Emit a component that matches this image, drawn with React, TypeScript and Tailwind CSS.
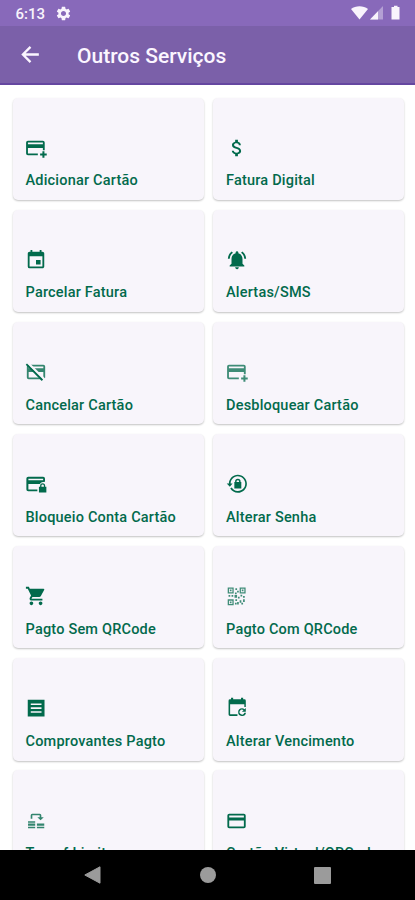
import React from 'react';
import {
  MdAttachMoney,
  MdEvent,
  MdNotificationsActive,
  MdSettings,
  MdShoppingCart,
} from 'react-icons/md';

interface Service {
  id: string;
  name: string;
  icon: React.ReactNode;
}

interface GlyphProps {
  children: React.ReactNode;
  className?: string;
}

function Glyph({ children, className = '' }: GlyphProps) {
  return (
    <svg viewBox="0 0 24 24" fill="currentColor" className={`h-[22px] w-[22px] ${className}`}>
      {children}
    </svg>
  );
}

function CardIcon() {
  return (
    <Glyph>
      <path
        fillRule="evenodd"
        d="M3.500 4h16a2 2 0 0 1 2 2v12a2 2 0 0 1-2 2h-16a2 2 0 0 1-2-2V6a2 2 0 0 1 2-2zm0 2v2.300h16V6zm0 5.500V18h16v-6.500z"
      />
    </Glyph>
  );
}

function CardPlusIcon({ className }: { className?: string }) {
  return (
    <Glyph className={className}>
      <path
        fillRule="evenodd"
        d="M3.200 4h16.300a2 2 0 0 1 2 2v8.500h-2V12H3.200v6H14v2H3.200a2 2 0 0 1-2-2V6a2 2 0 0 1 2-2zm0 2v2h16.300V6z"
      />
      <path d="M19 15.500h2.200V18h2.500v2.200h-2.500v2.500H19v-2.500h-2.500V18H19z" />
    </Glyph>
  );
}

function CardOffIcon() {
  return (
    <Glyph>
      <path
        fillRule="evenodd"
        opacity="0.8"
        d="M4 4h16a2 2 0 0 1 2 2v12a2 2 0 0 1-2 2H4a2 2 0 0 1-2-2V6a2 2 0 0 1 2-2zm0 2v2h16V6zm0 6v6h16v-6z"
      />
      <path d="M3 2l18.500 18.500" stroke="#f8f5fb" strokeWidth="2.800" />
      <path d="M1.500 3.500l17.500 17.500" stroke="currentColor" strokeWidth="2" />
    </Glyph>
  );
}

function CardLockIcon() {
  return (
    <Glyph>
      <path
        fillRule="evenodd"
        d="M3.500 4h16.300a2 2 0 0 1 2 2v3.500c-2.800 0-4.600.9-5.500 2.500H3.700v6h9.800v2h-10a2 2 0 0 1-2-2V6a2 2 0 0 1 2-2zm.2 2.300v1.500h16.100V6.300z"
      />
      <path
        fillRule="evenodd"
        d="M22 15v-1a2.750 2.750 0 0 0-5.500 0v1h-1.300v6.200h8.100V15zm-4.100-1a1.350 1.350 0 0 1 2.700 0v1h-2.700z"
      />
    </Glyph>
  );
}

function LockResetIcon() {
  return (
    <Glyph>
      <g transform="translate(0 -.4)">
        <path d="M12.900 2.200c5.500 0 9.900 4.400 9.900 9.800s-4.400 9.900-9.900 9.900c-3.500 0-6.600-1.900-8.300-4.700l1.600-1a8 8 0 1 0-1.200-4.400h2.200L4.200 15.300.8 11.800h2.300c.2-5.300 4.500-9.600 9.800-9.600z" />
        <path
          fillRule="evenodd"
          d="M15.900 10.300v-.7a3 3 0 0 0-6 0v.7h-.8v6.900h7.600v-6.900zm-4.400-.7a1.400 1.400 0 0 1 2.800 0v.7h-2.800z"
        />
      </g>
    </Glyph>
  );
}

function QrIcon() {
  return (
    <Glyph className="opacity-75">
      <g transform="translate(0 .8) scale(.93)">
        <path
          fillRule="evenodd"
          d="M2 2h7v7H2zm1.500 1.500v4h4v-4zM16 2h7v7h-7zm1.500 1.500v4h4v-4zM2 16h7v7H2zm1.500 1.500v4h4v-4z"
        />
        <path d="M4.500 4.500h2v2h-2zM18.500 4.500h2v2h-2zM4.500 18.500h2v2h-2zM11 3h2v2h-2zM13 6h2v2h-2zM10.500 8h2v2h-2zM3 11h2v2H3zM6.500 11h2v2h-2zM10 11h3v3h-3zM14 13h2v2h-2zM17 10.500h2v2h-2zM20 12h2v2h-2zM11 16h2v2h-2zM13 19h2v3h-2zM10.500 20h2v2h-2zM16 17h2v3h-2zM18 20h2v2h-2zM20 16h2v3h-2z" />
      </g>
    </Glyph>
  );
}

function ReceiptIcon() {
  return (
    <Glyph>
      <path
        fillRule="evenodd"
        d="M3 3h18.300v18.300H3zM6.300 7v1.700H18V7zm0 4.300V13H18v-1.700zm0 4.300v1.700H18v-1.700z"
      />
    </Glyph>
  );
}

function CalendarRefreshIcon() {
  return (
    <Glyph>
      <path
        fillRule="evenodd"
        d="M5.500 2.500V.8h2.300v1.700h8.600V.8h2.300v1.700H20a1.600 1.600 0 0 1 1.600 1.600V11H20V7.800H4.500v11h8v1.800H4.400a1.600 1.600 0 0 1-1.600-1.600V4.100a1.600 1.600 0 0 1 1.600-1.600z"
      />
      <path d="M17.600 12.200c1 0 1.900.4 2.600 1.100l1.400-1.400v4.200h-4.200l1.800-1.800a2.700 2.700 0 1 0 .9 3h1.700a4.300 4.300 0 1 1-4.200-5.100z" />
    </Glyph>
  );
}

function TransferIcon() {
  return (
    <Glyph className="opacity-80">
      <path d="M6.200 9.500V5.700A1.700 1.700 0 0 1 7.900 4h8.200a1.700 1.700 0 0 1 1.700 1.700v2.100h2.700l-3.500 3.500-3.500-3.500H16V5.700H8v3.800z" />
      <path d="M3.300 12.300h7.800v1.500H3.300zM3.300 14.600h7.800v2.600H3.300zM3.300 18.300h7.800v1.700H3.300zM13 14.600h8v2.600h-8zM13 18.300h8v1.700h-8z" />
    </Glyph>
  );
}

const services: Service[] = [
  { id: '1', name: 'Adicionar Cartão', icon: <CardPlusIcon /> },
  { id: '2', name: 'Fatura Digital', icon: <MdAttachMoney className="h-[22px] w-[22px]" /> },
  { id: '3', name: 'Parcelar Fatura', icon: <MdEvent className="h-[22px] w-[22px]" /> },
  { id: '4', name: 'Alertas/SMS', icon: <MdNotificationsActive className="h-[22px] w-[22px]" /> },
  { id: '5', name: 'Cancelar Cartão', icon: <CardOffIcon /> },
  { id: '6', name: 'Desbloquear Cartão', icon: <CardPlusIcon className="opacity-75" /> },
  { id: '7', name: 'Bloqueio Conta Cartão', icon: <CardLockIcon /> },
  { id: '8', name: 'Alterar Senha', icon: <LockResetIcon /> },
  { id: '9', name: 'Pagto Sem QRCode', icon: <MdShoppingCart className="h-[22px] w-[22px]" /> },
  { id: '10', name: 'Pagto Com QRCode', icon: <QrIcon /> },
  { id: '11', name: 'Comprovantes Pagto', icon: <ReceiptIcon /> },
  { id: '12', name: 'Alterar Vencimento', icon: <CalendarRefreshIcon /> },
  { id: '13', name: 'Transf.Limite', icon: <TransferIcon /> },
  { id: '14', name: 'Cartão Virtual/QRCode', icon: <CardIcon /> },
];

function StatusBar() {
  return (
    <div className="flex h-[26px] shrink-0 items-center bg-[#8869ba] pr-[14px] pl-[15.500px] text-[#f8f3fc]">
      <span className="mt-[2px] text-[15px] leading-none font-medium">6:13</span>
      <MdSettings className="ml-[10px] h-[17px] w-[17px]" />
      <svg viewBox="0 0 50 16" fill="currentColor" className="ml-auto h-4 w-[50px]">
        <path d="M0 4C4.500.3 12.500.3 17 4L8.500 14.500z" />
        <path d="M32 1v13.500H19z" opacity="0.4" />
        <path d="M27 6.200v8.300h-8z" />
        <path d="M41 2h2V.8h3.500V2h2v12.500H40.500V2z" />
      </svg>
    </div>
  );
}

function ServiceCard({ service }: { service: Service }) {
  return (
    <div className="flex h-[102.600px] flex-col rounded-[5px] bg-[#f8f5fb] pt-[39.500px] pl-[12.500px] text-[#026a4c] shadow-[0_1px_2px_rgba(0,0,0,0.24)]">
      <div className="h-[22px]">{service.icon}</div>
      <span className="mt-[12.400px] ml-[0.500px] text-[14.500px] leading-[20px] font-medium tracking-[0.200px] whitespace-nowrap">
        {service.name}
      </span>
    </div>
  );
}

export default function App() {
  return (
    <div className="flex h-[900px] w-[415px] flex-col overflow-hidden bg-white font-['Roboto',sans-serif]">
      <StatusBar />
      <header className="flex h-[59px] shrink-0 items-center border-b-2 border-[#6547a0] bg-[#7b60a9] pl-[17.500px] text-[#fbf6ff]">
        <svg viewBox="0 0 24 24" fill="none" className="-mt-px h-[25px] w-[25px]">
          <path d="M20 12H5M12 4.700L4.700 12l7.300 7.300" stroke="currentColor" strokeWidth="2.200" />
        </svg>
        <h1 className="mt-[4px] ml-[34.500px] text-[21px] leading-none font-medium">Outros Serviços</h1>
      </header>

      <main className="grid min-h-0 flex-1 auto-rows-[102.600px] grid-cols-[191px_191px] gap-x-[9.500px] gap-y-[9.500px] overflow-hidden pt-[12.500px] pl-[12.500px]">
        {services.map((service) => (
          <ServiceCard key={service.id} service={service} />
        ))}
      </main>

      <nav className="flex h-[50px] shrink-0 items-center bg-black pl-[84px] text-[#9b9b9b]">
        <svg viewBox="0 0 17 18" fill="currentColor" className="h-[18px] w-[17px]">
          <path d="M16 .8v16.400L.8 9z" stroke="currentColor" strokeLinejoin="round" />
        </svg>
        <span className="ml-[99px] h-4 w-4 rounded-full bg-[#9b9b9b]" />
        <span className="ml-[98px] h-[17px] w-[17px] rounded-[1px] bg-[#9b9b9b]" />
      </nav>
    </div>
  );
}
